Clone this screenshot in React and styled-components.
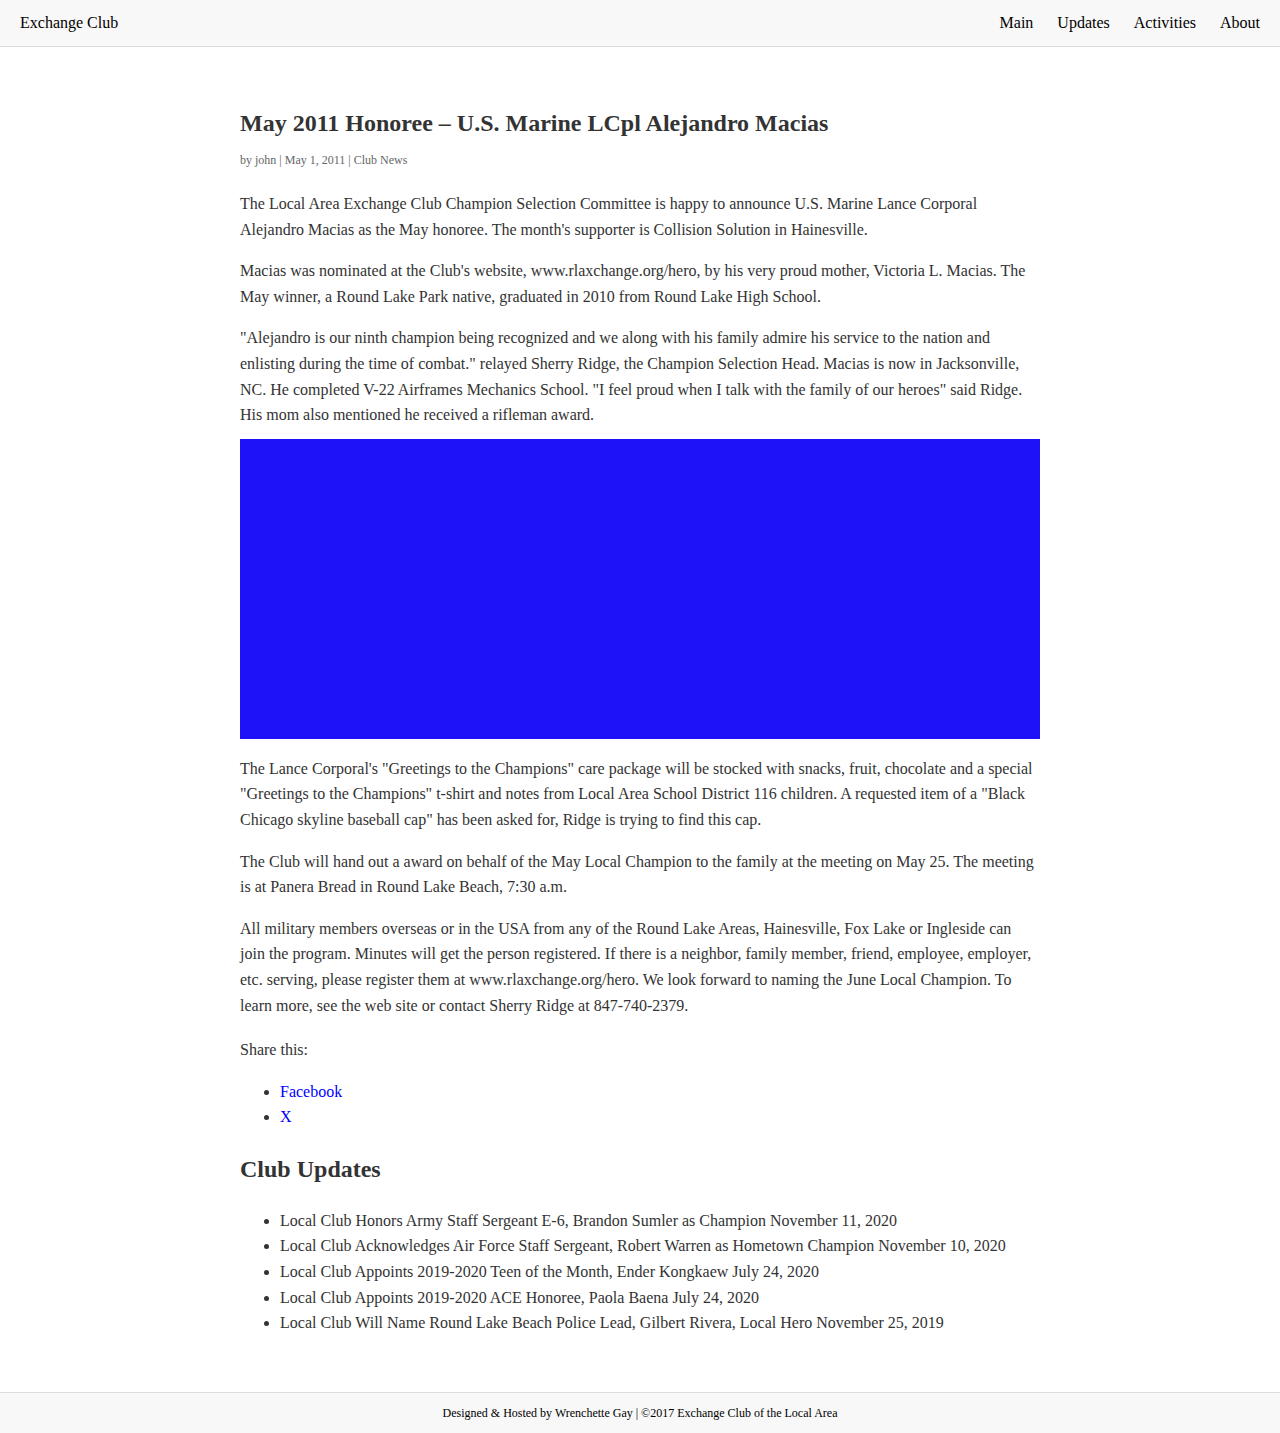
import React from 'react';
import styled, { createGlobalStyle } from 'styled-components';

const GlobalStyle = createGlobalStyle`
  html, body { margin: 0; padding: 0; background: #fff; }
  body {
    font-family: "Liberation Serif", "Times New Roman", serif;
    color: #333;
  }
`;

const updates = [
  'Local Club Honors Army Staff Sergeant E-6, Brandon Sumler as Champion November 11, 2020',
  'Local Club Acknowledges Air Force Staff Sergeant, Robert Warren as Hometown Champion November 10, 2020',
  'Local Club Appoints 2019-2020 Teen of the Month, Ender Kongkaew July 24, 2020',
  'Local Club Appoints 2019-2020 ACE Honoree, Paola Baena July 24, 2020',
  'Local Club Will Name Round Lake Beach Police Lead, Gilbert Rivera, Local Hero November 25, 2019',
];

export default function App() {
  return (
    <Page>
      <GlobalStyle />
      <Header>
        <Brand>Exchange Club</Brand>
        <Nav>
          <NavLink>Main</NavLink>
          <NavLink>Updates</NavLink>
          <NavLink>Activities</NavLink>
          <NavLink>About</NavLink>
        </Nav>
      </Header>

      <Main>
        <Article>
          <Title>May 2011 Honoree – U.S. Marine LCpl Alejandro Macias</Title>
          <Meta>by john | May 1, 2011 | Club News</Meta>

          <Para>
            The Local Area Exchange Club Champion Selection Committee is happy to announce U.S. Marine Lance Corporal
            Alejandro Macias as the May honoree. The month's supporter is Collision Solution in Hainesville.
          </Para>
          <Para>
            Macias was nominated at the Club's website, www.rlaxchange.org/hero, by his very proud mother, Victoria L. Macias. The
            May winner, a Round Lake Park native, graduated in 2010 from Round Lake High School.
          </Para>
          <Para>
            "Alejandro is our ninth champion being recognized and we along with his family admire his service to the nation and
            enlisting during the time of combat." relayed Sherry Ridge, the Champion Selection Head. Macias is now in Jacksonville,
            NC. He completed V-22 Airframes Mechanics School. "I feel proud when I talk with the family of our heroes" said Ridge.
            His mom also mentioned he received a rifleman award.
          </Para>

          <Photo />

          <Para>
            The Lance Corporal's "Greetings to the Champions" care package will be stocked with snacks, fruit, chocolate and a special
            "Greetings to the Champions" t-shirt and notes from Local Area School District 116 children. A requested item of a "Black
            Chicago skyline baseball cap" has been asked for, Ridge is trying to find this cap.
          </Para>
          <Para>
            The Club will hand out a award on behalf of the May Local Champion to the family at the meeting on May 25. The meeting
            is at Panera Bread in Round Lake Beach, 7:30 a.m.
          </Para>
          <Para>
            All military members overseas or in the USA from any of the Round Lake Areas, Hainesville, Fox Lake or Ingleside can
            join the program. Minutes will get the person registered. If there is a neighbor, family member, friend, employee, employer,
            etc. serving, please register them at www.rlaxchange.org/hero. We look forward to naming the June Local Champion. To
            learn more, see the web site or contact Sherry Ridge at 847-740-2379.
          </Para>

          <Share>
            <ShareLabel>Share this:</ShareLabel>
            <List>
              <li><BlueLink href="#">Facebook</BlueLink></li>
              <li><BlueLink href="#">X</BlueLink></li>
            </List>
          </Share>
        </Article>

        <Section>
          <SectionTitle>Club Updates</SectionTitle>
          <List>
            {updates.map((u) => (
              <li key={u}>{u}</li>
            ))}
          </List>
        </Section>
      </Main>

      <Footer>Designed &amp; Hosted by Wrenchette Gay | ©2017 Exchange Club of the Local Area</Footer>
    </Page>
  );
}

const Page = styled.div`
  display: flex;
  flex-direction: column;
  min-height: 100vh;
`;

const Header = styled.header`
  display: flex;
  align-items: center;
  justify-content: space-between;
  height: 46px;
  padding: 0 20px;
  background: #f8f8f8;
  border-bottom: 1px solid #ddd;
  color: #000;
  font-size: 16px;
`;

const Brand = styled.div``;

const Nav = styled.nav`
  display: flex;
  gap: 24px;
`;

const NavLink = styled.span`
  color: #000;
`;

const Main = styled.main`
  flex: 1;
  width: 800px;
  margin: 0 auto;
  padding: 61px 0 40px;
`;

const Article = styled.article``;

const Title = styled.h1`
  margin: 0;
  font-size: 24px;
  line-height: 30px;
  font-weight: bold;
  color: #333;
`;

const Meta = styled.div`
  margin-top: 13px;
  font-size: 12px;
  line-height: 19px;
  color: #666;
`;

const Para = styled.p`
  margin: 0 0 16px;
  font-size: 16px;
  line-height: 1.6;
  &:first-of-type { margin-top: 21px; }
`;

const Photo = styled.div`
  width: 800px;
  height: 300px;
  margin: -5px 0 17px;
  background: #1e12f8;
`;

const Share = styled.div`
  margin-top: 19px;
`;

const ShareLabel = styled.div`
  font-size: 16px;
  line-height: 1.6;
  margin-bottom: 16px;
`;

const List = styled.ul`
  margin: 0 0 16px;
  padding-left: 40px;
  font-size: 16px;
  line-height: 1.6;
`;

const BlueLink = styled.a`
  color: #0000ff;
  text-decoration: none;
`;

const Section = styled.section``;

const SectionTitle = styled.h2`
  margin: 20px 0 20px;
  font-size: 24px;
  line-height: 38px;
  font-weight: bold;
  color: #333;
`;

const Footer = styled.footer`
  height: 40px;
  display: flex;
  align-items: center;
  justify-content: center;
  background: #f8f8f8;
  border-top: 1px solid #ddd;
  font-size: 12px;
  color: #000;
`;
